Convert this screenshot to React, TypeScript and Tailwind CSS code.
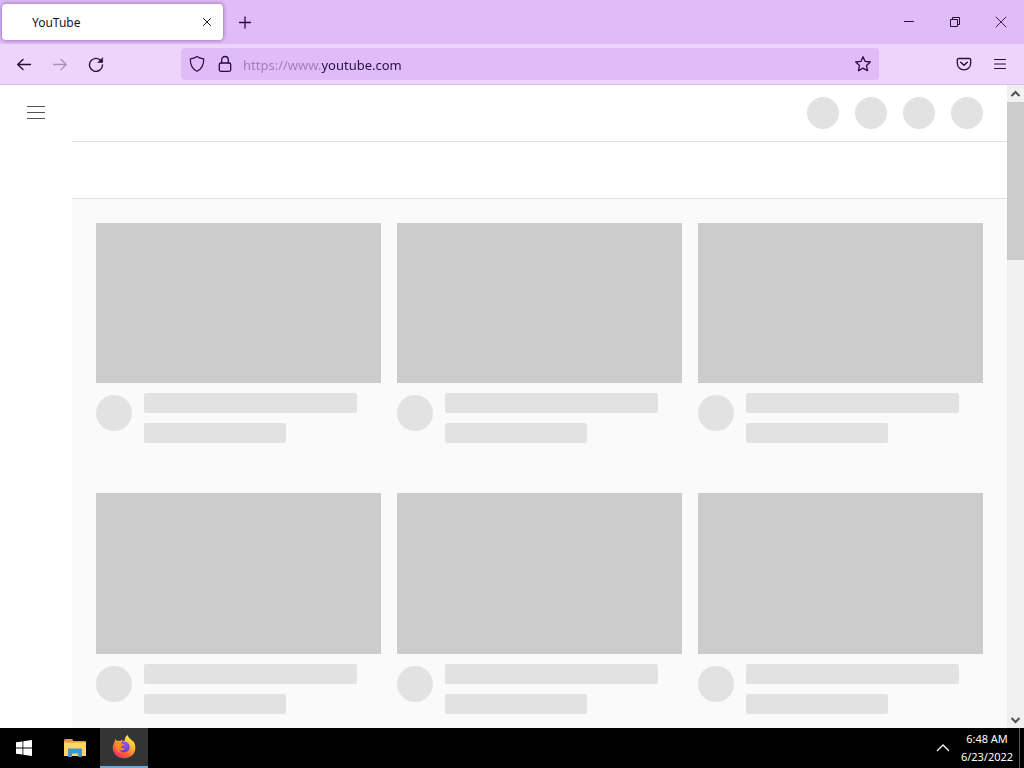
import React from "react";

const stroke = {
  fill: "none",
  stroke: "currentColor",
  strokeLinecap: "round" as const,
  strokeLinejoin: "round" as const,
};

function IconButton({
  label,
  className = "",
  disabled = false,
  children,
}: {
  label: string;
  className?: string;
  disabled?: boolean;
  children: React.ReactNode;
}) {
  return (
    <button
      type="button"
      aria-label={label}
      disabled={disabled}
      className={`flex shrink-0 items-center justify-center ${className}`}
    >
      {children}
    </button>
  );
}

function TabBar() {
  return (
    <div className="flex h-11 shrink-0 items-center bg-[#dfbbf8] pl-0.5">
      <div className="flex h-9 w-[221px] items-center justify-between rounded bg-white pr-2 pl-[30px] shadow-[0_0_4px_rgba(60,20,90,0.55)]">
        <span className="pt-0.5 text-xs text-[#15141a]">YouTube</span>
        <IconButton label="Close tab" className="size-4">
          <svg width="16" height="16" viewBox="0 0 16 16" {...stroke} strokeWidth="1">
            <path d="M4.500 4.500l7 7M11.500 4.500l-7 7" />
          </svg>
        </IconButton>
      </div>
      <IconButton label="New tab" className="ml-1 size-9">
        <svg width="16" height="16" viewBox="0 0 16 16" {...stroke} strokeWidth="1.3">
          <path d="M2.5 8.5h11M8 3v11" />
        </svg>
      </IconButton>
      <div className="ml-auto flex h-full">
        <IconButton label="Minimize" className="w-[46px]">
          <svg width="12" height="12" viewBox="0 0 12 12" {...stroke} strokeWidth="1">
            <path d="M1.5 5.5h9" />
          </svg>
        </IconButton>
        <IconButton label="Restore" className="w-[46px]">
          <svg width="12" height="12" viewBox="0 0 12 12" fill="none" stroke="currentColor" strokeWidth="1">
            <path d="M1.5 3.5h7v7h-7zM3.5 3.5v-2h7v7h-2" />
          </svg>
        </IconButton>
        <IconButton label="Close window" className="w-[46px]">
          <svg width="12" height="12" viewBox="0 0 12 12" {...stroke} strokeWidth="0.9">
            <path d="M1 1l10 10M11 1L1 11" />
          </svg>
        </IconButton>
      </div>
    </div>
  );
}

function Toolbar() {
  return (
    <div className="flex h-[41px] shrink-0 items-center border-b border-[#d8c3e4] bg-[#eed4fa] px-1.5">
      <IconButton label="Back" className="size-9">
        <svg width="16" height="16" viewBox="0 0 16 16" {...stroke} strokeWidth="1.4">
          <path d="M14.500 8.500H1.700M7 3.500L1.700 8.500 7 13.500" />
        </svg>
      </IconButton>
      <IconButton label="Forward" disabled className="size-9 text-[#b08fc0]">
        <svg width="16" height="16" viewBox="0 0 16 16" {...stroke} strokeWidth="1.3">
          <path d="M1.500 8.500h12.800M9 3.500L14.300 8.500 9 13.500" />
        </svg>
      </IconButton>
      <IconButton label="Reload" className="size-9">
        <svg width="16" height="16" viewBox="0 0 16 16" {...stroke} strokeWidth="1.4">
          <path d="M13 4.700A6.500 6.500 0 1 0 14.500 9" />
          <path d="M14.600 2v4.400h-4.400z" fill="currentColor" strokeWidth="0.7" />
        </svg>
      </IconButton>
      <div className="mr-[67px] ml-[67px] flex h-8 min-w-0 flex-1 items-center rounded bg-[#dfbbf8] pr-1">
        <IconButton label="Tracking protection" className="ml-0.5 size-7">
          <svg width="16" height="18" viewBox="0 0 16 18" {...stroke} strokeWidth="1.2">
            <path d="M8 1.500c2 1.400 4.200 2.100 6.700 2.300.1 5.300-1.500 10.200-6.700 12.500C2.800 14 1.200 9.100 1.300 3.800 3.800 3.600 6 2.900 8 1.500z" />
          </svg>
        </IconButton>
        <IconButton label="Site information" className="size-7">
          <svg width="14" height="18" viewBox="0 0 14 18" {...stroke} strokeWidth="1.3">
            <rect x="1.3" y="8" width="11.400" height="8.300" rx="1.500" />
            <path d="M3.700 8V4.800a3.300 3.300 0 0 1 6.600 0V8" />
          </svg>
        </IconButton>
        <input
          type="text"
          aria-label="Address"
          defaultValue="https://www.youtube.com"
          spellCheck={false}
          className="ml-1 h-7 min-w-0 flex-1 bg-[linear-gradient(90deg,#a17bb5_78px,#28103a_78px)] bg-clip-text pt-0.5 text-[13px] text-transparent caret-[#28103a] outline-none"
        />
        <IconButton label="Bookmark this page" className="size-6">
          <svg width="18" height="18" viewBox="0 0 18 18" {...stroke} strokeWidth="1.3">
            <path d="M9 1.700l2.100 4.700 5.200.6-3.800 3.500 1 5.200L9 13.100l-4.500 2.600 1-5.200L1.700 7l5.200-.6z" />
          </svg>
        </IconButton>
      </div>
      <IconButton label="Save to Pocket" className="size-9">
        <svg width="16" height="16" viewBox="0 0 16 16" {...stroke} strokeWidth="1.3">
          <path d="M2.600 2.500h10.800c.8 0 1.300.5 1.300 1.300v3.400a6.700 6.700 0 0 1-13.400 0V3.800c0-.8.500-1.300 1.300-1.300z" />
          <path d="M4.700 6.300L8 9.300l3.300-3" strokeWidth="1.500" />
        </svg>
      </IconButton>
      <IconButton label="Open application menu" className="size-9">
        <svg width="16" height="16" viewBox="0 0 16 16" {...stroke} strokeWidth="1.2">
          <path d="M2.500 3.500h11M2.500 8h11M2.500 12.500h11" />
        </svg>
      </IconButton>
    </div>
  );
}

function PlaceholderCard() {
  return (
    <article>
      <div className="aspect-video bg-[#cccccc]" />
      <div className="flex gap-3 pt-2.5">
        <div className="mt-0.5 size-9 shrink-0 rounded-full bg-[#e2e2e2]" />
        <div className="flex flex-1 flex-col gap-2.5">
          <div className="h-5 w-[90%] rounded-xs bg-[#e2e2e2]" />
          <div className="h-5 w-[60%] rounded-xs bg-[#e2e2e2]" />
        </div>
      </div>
    </article>
  );
}

function ScrollBar() {
  return (
    <div className="flex w-[17px] shrink-0 flex-col bg-[#f0f0f0] text-[#505050]">
      <IconButton label="Scroll up" className="h-[17px]">
        <svg width="11" height="8" viewBox="0 0 11 8" fill="none" stroke="currentColor" strokeWidth="2">
          <path d="M1.500 6l4-4 4 4" />
        </svg>
      </IconButton>
      <div className="min-h-0 flex-1">
        <div className="h-[26%] bg-[#cccccc]" />
      </div>
      <IconButton label="Scroll down" className="h-[17px]">
        <svg width="11" height="8" viewBox="0 0 11 8" fill="none" stroke="currentColor" strokeWidth="2">
          <path d="M1.500 2l4 4 4-4" />
        </svg>
      </IconButton>
    </div>
  );
}

function PageView() {
  return (
    <div className="flex min-h-0 flex-1 bg-white">
      <nav className="flex w-[72px] shrink-0 justify-center">
        <IconButton label="Guide" className="h-14 w-10 text-[#55505a]">
          <svg width="18" height="14" viewBox="0 0 18 14" fill="none" stroke="currentColor" strokeWidth="1">
            <path d="M0 .5h18M0 6.500h18M0 12.500h18" />
          </svg>
        </IconButton>
      </nav>
      <main className="flex min-w-0 flex-1 flex-col overflow-hidden">
        <header className="flex h-[57px] shrink-0 items-center justify-end gap-4 border-b border-[#e2e2e2] pr-6">
          {[0, 1, 2, 3].map((i) => (
            <div key={i} className="size-8 rounded-full bg-[#e2e2e2]" />
          ))}
        </header>
        <div className="h-[57px] shrink-0 border-b border-[#e0e0e0]" />
        <div className="min-h-0 flex-1 overflow-hidden bg-[#fafafa] p-6">
          <div className="grid grid-cols-3 gap-x-4 gap-y-[50px]">
            {[0, 1, 2, 3, 4, 5].map((i) => (
              <PlaceholderCard key={i} />
            ))}
          </div>
        </div>
      </main>
      <ScrollBar />
    </div>
  );
}

function FirefoxLogo() {
  return (
    <svg width="24" height="24" viewBox="0 0 24 24">
      <defs>
        <linearGradient id="flame" x1="0.8" y1="0.05" x2="0.2" y2="1">
          <stop offset="0" stopColor="#fff04a" />
          <stop offset="0.35" stopColor="#ffb52c" />
          <stop offset="0.65" stopColor="#ff6a33" />
          <stop offset="1" stopColor="#f5226d" />
        </linearGradient>
        <radialGradient id="globe" cx="0.6" cy="0.3" r="0.8">
          <stop offset="0" stopColor="#9059ff" />
          <stop offset="1" stopColor="#5b3ab0" />
        </radialGradient>
      </defs>
      <path
        fill="url(#flame)"
        d="M12.800 5.600c-.2-2.400 1-4.500 3-5.500.2 2 1.500 3 2.900 4.200.9.800 1.500 1.700 1.800 2.600.1-.7 0-1.400-.2-2 2.300 2.200 3 4.900 3 8 0 6-4.900 10.300-11.300 10.300C5.700 23.200.8 18.700.8 13c0-2.600.8-4.700 1.900-6.300 0-.9.3-1.900.9-2.600.3 1 .8 1.500 1.300 1.900 1.100-.3 2.300-.1 3.100.3.800-1.100 1.800-1.700 2.800-1.900-.6.8-.8 1.400-.7 2z"
      />
      <path
        fill="url(#globe)"
        d="M8.200 8.200c1.800-1.500 4.300-1.700 6.400-.9 2.100.9 3.200 2.900 3 5.100-.2 2.900-2.500 4.900-5.300 4.900-2.900 0-5.300-2-5.300-5 0-1.700.4-3 1.200-4.100z"
      />
      <path
        fill="#ff8a2c"
        d="M3.500 8.200c1.600-1 3.300-1.200 4.700-.7 1.400.5 2 1.400 4 1.500-.2 1.300-1.500 1.500-2.300 2-.7.500-.5 1.100-.8 1.900 1.300.8 2.500.9 4.200.1-.8 2-2.500 2.900-4.500 2.300-1-.3-1.700-.9-2.200-1.700.2 1.800 1 3.300 2.400 4.400-3.900-.8-6-4.500-5.500-9.800z"
      />
    </svg>
  );
}

function Taskbar() {
  return (
    <footer className="flex h-10 shrink-0 items-stretch bg-black text-white">
      <IconButton label="Start" className="w-12">
        <svg width="16" height="16" viewBox="0 0 16 16" fill="currentColor">
          <path d="M0 2.300l6.500-.9v6.200H0zM7.300 1.300L16 0v7.600H7.300zM0 8.400h6.500v6.200L0 13.700zM7.300 8.400H16V16l-8.700-1.200z" />
        </svg>
      </IconButton>
      <IconButton label="File Explorer" className="ml-[3px] w-12">
        <svg width="22" height="18" viewBox="0 0 22 18">
          <path d="M0 1.500Q0 0 1.500 0H8l1.500 2H22v3H0z" fill="#dda032" />
          <path d="M0 3.500h22V17H0z" fill="#fbd768" />
          <path d="M4 9.500h14V18h-4v-3.500H8V18H4z" fill="#4097cf" />
        </svg>
      </IconButton>
      <IconButton label="Firefox" className="ml-px w-12 border-b-2 border-[#68aae0] bg-[#343434]">
        <FirefoxLogo />
      </IconButton>
      <div className="ml-auto flex items-stretch">
        <IconButton label="Show hidden icons" className="w-8">
          <svg width="14" height="8" viewBox="0 0 14 8" fill="none" stroke="currentColor" strokeWidth="1.300">
            <path d="M1 7l6-6 6 6" />
          </svg>
        </IconButton>
        <button
          type="button"
          className="flex w-[60px] flex-col items-center justify-center pr-1 text-[11px] leading-[18px]"
        >
          <span>6:48 AM</span>
          <span>6/23/2022</span>
        </button>
        <IconButton label="Show desktop" className="w-[5px] border-l border-[#555555]">
          {null}
        </IconButton>
      </div>
    </footer>
  );
}

export default function App() {
  return (
    <div className="flex h-screen flex-col overflow-hidden font-['Noto_Sans','Open_Sans',sans-serif] text-[#2a0d3b]">
      <TabBar />
      <Toolbar />
      <PageView />
      <Taskbar />
    </div>
  );
}
